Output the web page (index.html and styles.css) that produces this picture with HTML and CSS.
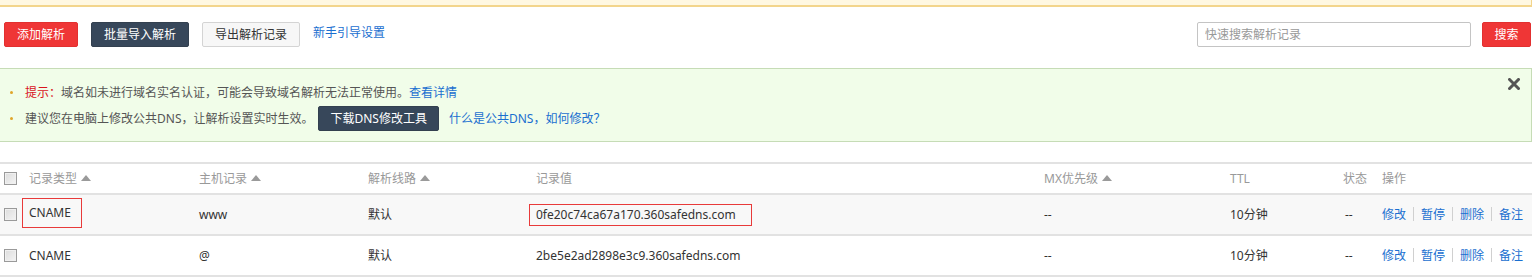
FILE: index.html
```html
<!DOCTYPE html>
<html lang="zh-CN">
  <head>
    <meta charset="UTF-8" />
    <meta name="viewport" content="width=device-width, initial-scale=1.0" />
    <link rel="stylesheet" href="styles.css">
    <title>解析记录</title>
  </head>
  <body>
    <div class="page">
      <div class="top-bar"></div>

      <div class="toolbar">
        <div class="toolbar-left">
          <button class="btn btn-red">添加解析</button>
          <button class="btn btn-dark">批量导入解析</button>
          <button class="btn btn-light">导出解析记录</button>
          <a class="link" href="#">新手引导设置</a>
        </div>
        <div class="toolbar-right">
          <input class="search" type="text" placeholder="快速搜索解析记录" />
          <button class="btn btn-red btn-search">搜索</button>
        </div>
      </div>

      <div class="notice">
        <ul>
          <li><span class="tip">提示：</span>域名如未进行域名实名认证，可能会导致域名解析无法正常使用。<a class="link" href="#">查看详情</a></li>
          <li>建议您在电脑上修改公共DNS，让解析设置实时生效。<button class="btn btn-dark btn-dns">下载DNS修改工具</button><a class="link" href="#">什么是公共DNS，如何修改？</a></li>
        </ul>
        <svg class="close" width="12" height="12" viewBox="0 0 12 12">
          <path d="M1.5 1.5 L10.5 10.5 M10.5 1.5 L1.5 10.5" stroke="#555" stroke-width="3" stroke-linecap="square" />
        </svg>
      </div>

      <table class="records">
        <colgroup>
          <col style="width: 29px" />
          <col style="width: 170px" />
          <col style="width: 169px" />
          <col style="width: 168px" />
          <col style="width: 508px" />
          <col style="width: 186px" />
          <col style="width: 113px" />
          <col style="width: 39px" />
          <col />
        </colgroup>
        <thead>
          <tr>
            <th class="check"><span class="box"></span></th>
            <th>记录类型<i class="sort"></i></th>
            <th>主机记录<i class="sort"></i></th>
            <th>解析线路<i class="sort"></i></th>
            <th>记录值</th>
            <th>MX优先级<i class="sort"></i></th>
            <th>TTL</th>
            <th>状态</th>
            <th>操作</th>
          </tr>
        </thead>
        <tbody>
          <tr class="alt">
            <td class="check"><span class="box"></span></td>
            <td><span class="mark mark-type">CNAME</span></td>
            <td>www</td>
            <td>默认</td>
            <td><span class="mark mark-value">0fe20c74ca67a170.360safedns.com</span></td>
            <td>--</td>
            <td>10分钟</td>
            <td class="status">--</td>
            <td class="ops"><a href="#">修改</a><span class="sep"></span><a href="#">暂停</a><span class="sep"></span><a href="#">删除</a><span class="sep"></span><a href="#">备注</a></td>
          </tr>
          <tr>
            <td class="check"><span class="box"></span></td>
            <td>CNAME</td>
            <td>@</td>
            <td>默认</td>
            <td>2be5e2ad2898e3c9.360safedns.com</td>
            <td>--</td>
            <td>10分钟</td>
            <td class="status">--</td>
            <td class="ops"><a href="#">修改</a><span class="sep"></span><a href="#">暂停</a><span class="sep"></span><a href="#">删除</a><span class="sep"></span><a href="#">备注</a></td>
          </tr>
        </tbody>
      </table>
    </div>
  </body>
</html>
```

FILE: styles.css
```css
* {
  margin: 0;
  padding: 0;
  box-sizing: border-box;
}
body {
  background: #fff;
  font-family: "Noto Sans", "Noto Sans CJK SC", sans-serif;
  font-size: 12px;
  line-height: 16px;
  color: #333;
}
a {
  text-decoration: none;
}
.page {
  width: 1532px;
}
.top-bar {
  height: 7px;
  background: #fff8e2;
  border: 1px solid #f3d58c;
  border-top: none;
  border-left: none;
  border-bottom-width: 2px;
}
.link {
  color: #1a6fd0;
}

/* toolbar */
.toolbar {
  display: flex;
  justify-content: space-between;
  align-items: center;
  padding: 15px 1px 0 4px;
  height: 40px;
}
.toolbar-left,
.toolbar-right {
  display: flex;
  align-items: center;
}
.toolbar-left .btn {
  margin-right: 13px;
}
.btn {
  height: 25px;
  padding: 0 12px;
  font-family: inherit;
  font-size: 12px;
  line-height: 23px;
  border: 1px solid transparent;
  border-radius: 2px;
  color: #fff;
  cursor: pointer;
}
.btn-red {
  background: #ef3636;
  border-color: #e23030;
}
.btn-dark {
  background: #37475a;
  border-color: #33404f;
}
.btn-light {
  background: #f7f7f7;
  border-color: #d4d4d4;
  color: #333;
}
.toolbar-left .link {
  margin-top: -3px;
}
.search {
  width: 274px;
  height: 25px;
  padding: 0 7px;
  border: 1px solid #c4c4c4;
  border-radius: 2px;
  font-family: inherit;
  font-size: 12px;
  color: #333;
  outline: none;
}
.search::placeholder {
  color: #999;
}
.btn-search {
  width: 49px;
  padding: 0;
  margin-left: 11px;
}

/* notice */
.notice {
  position: relative;
  margin-top: 21px;
  height: 74px;
  background: #f1fde9;
  border: 1px solid #c6dcb6;
  border-left: none;
  padding: 11px 0 0 25px;
  color: #555;
}
.notice ul {
  list-style: none;
}
.notice li {
  position: relative;
  height: 25px;
  display: flex;
  align-items: center;
}
.notice li + li {
  margin-top: 1px;
}
.notice li::before {
  content: "";
  position: absolute;
  left: -15px;
  top: 11px;
  width: 3px;
  height: 3px;
  border-radius: 50%;
  background: #e0a62a;
}
.tip {
  color: #d9141c;
}
.btn-dns {
  margin: 0 10px 0 5px;
  padding: 0 11px;
}
.close {
  position: absolute;
  right: 11px;
  top: 9px;
}

/* records table */
.records {
  width: 1532px;
  margin-top: 20px;
  border-collapse: collapse;
  table-layout: fixed;
}
.records th,
.records td {
  text-align: left;
  white-space: nowrap;
  border-top: 2px solid #e2e2e2;
  border-bottom: 2px solid #e2e2e2;
}
.records th {
  height: 31px;
  font-weight: normal;
  color: #999;
  vertical-align: middle;
}
.records td {
  height: 41px;
  color: #333;
}
.records tr.alt td {
  background: #f8f8f8;
}
.check {
  padding-left: 4px;
}
.box {
  display: block;
  width: 13px;
  height: 13px;
  border: 1px solid #9a9a9a;
  background: linear-gradient(135deg, #dcdcdc, #f4f4f4);
  box-shadow: inset 0 0 0 1px #f0f0f0;
}
.sort {
  display: inline-block;
  margin-left: 4px;
  width: 0;
  height: 0;
  border-left: 5px solid transparent;
  border-right: 5px solid transparent;
  border-bottom: 6px solid #9a9a9a;
  vertical-align: 2px;
}
.mark {
  display: inline-block;
  border: 1px solid #e83a3a;
}
.mark-type {
  padding: 6px 10px 6px 6px;
  margin: -6px -11px -6px -7px;
  position: relative;
  top: -2px;
}
.mark-value {
  padding: 2px 15px 2px 6px;
  margin: -3px -16px -3px -7px;
}
.status {
  padding-left: 2px;
}
.ops a {
  color: #1a6fd0;
}
.sep {
  display: inline-block;
  width: 1px;
  height: 14px;
  margin: 0 7px;
  background: #d0d0d0;
  vertical-align: -2px;
}
```
